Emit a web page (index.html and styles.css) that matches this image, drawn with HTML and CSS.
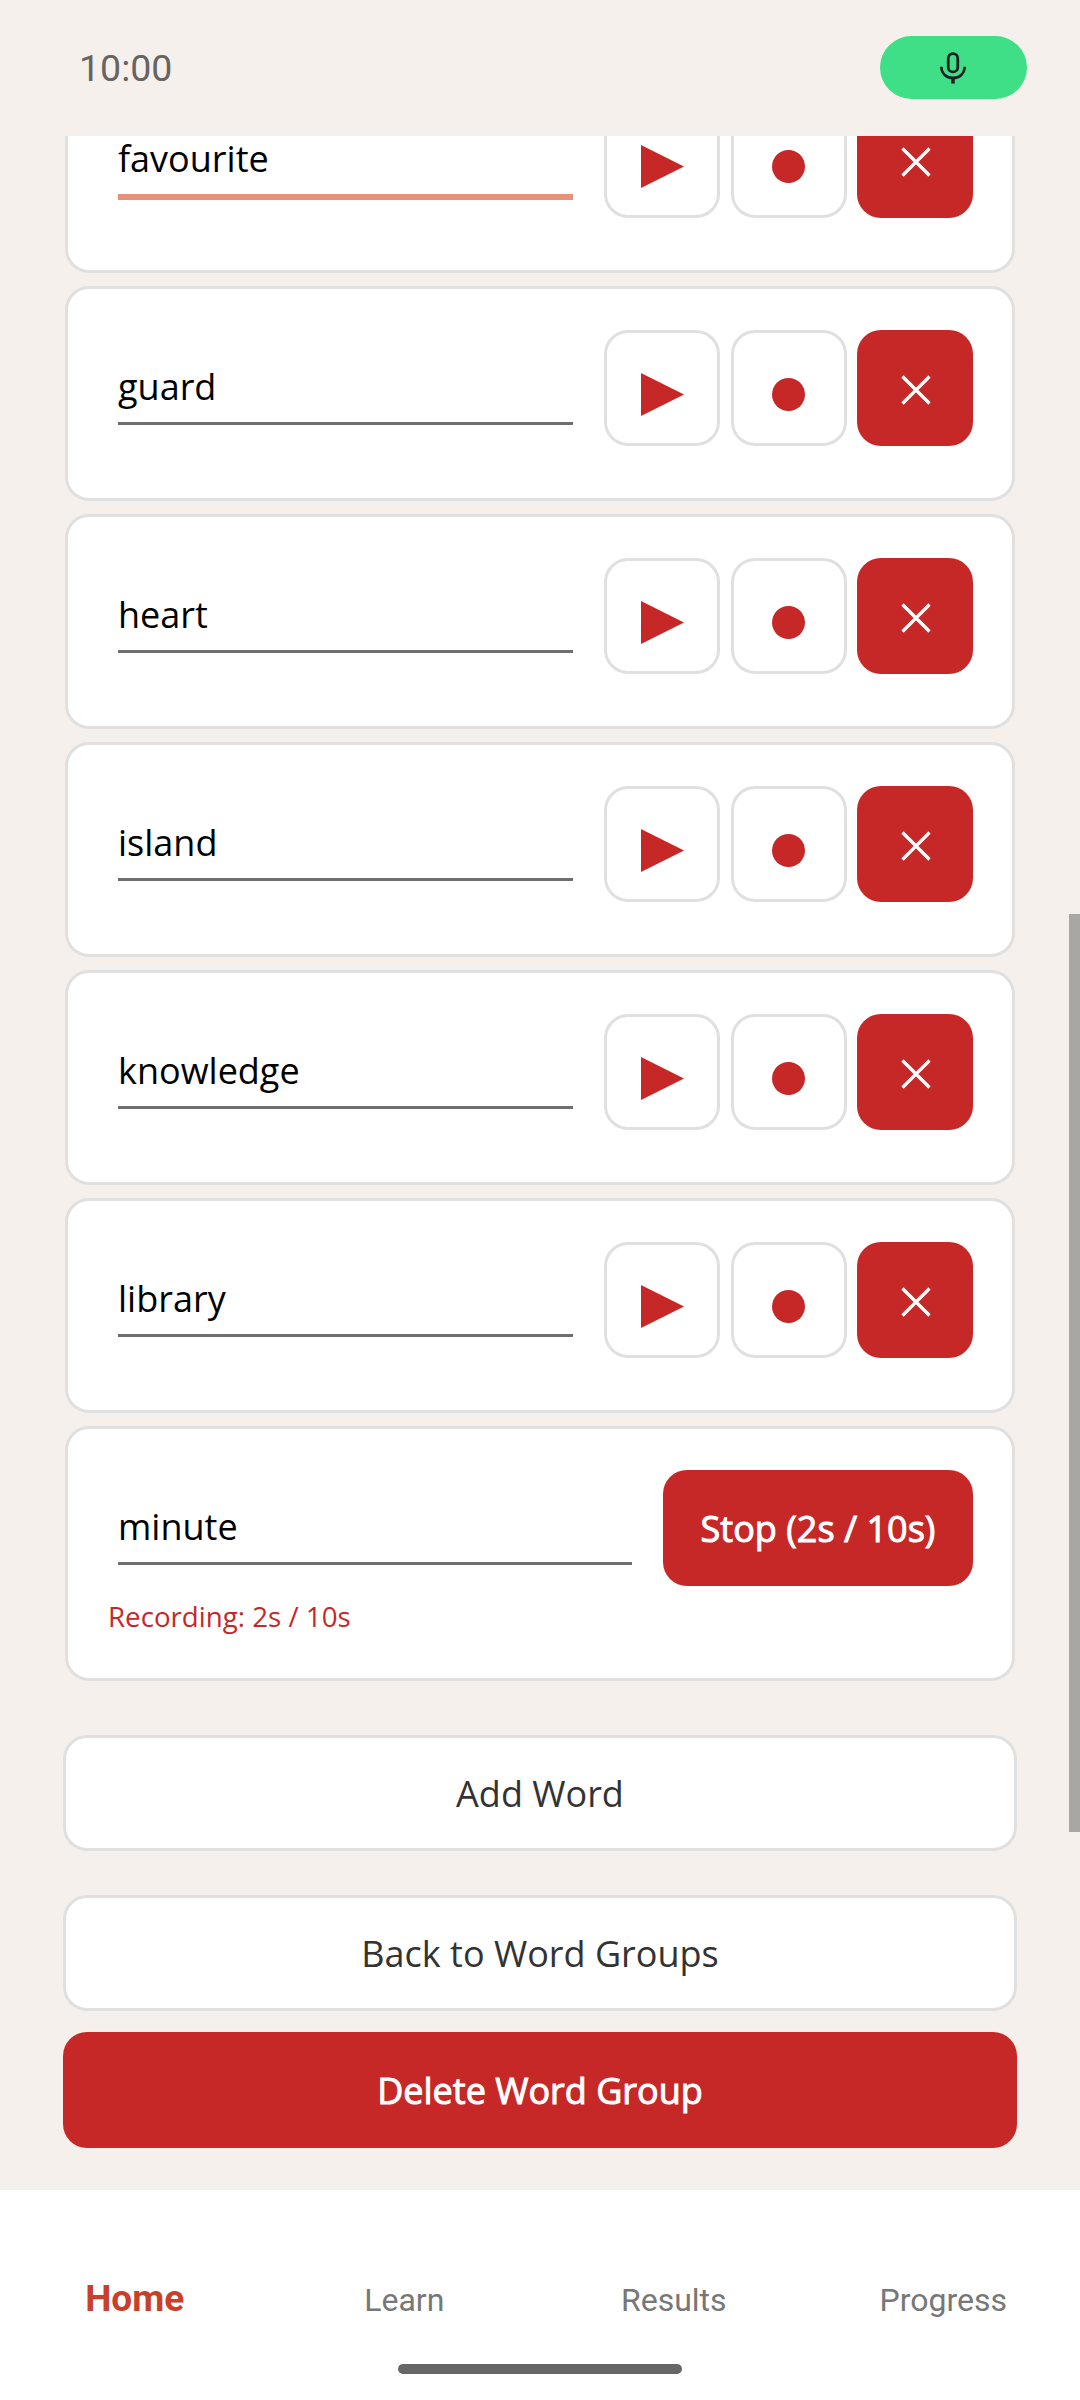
FILE: index.html
```html
<!DOCTYPE html>
<html lang="en">

<head>
    <meta charset="UTF-8">
    <meta name="viewport" content="width=device-width, initial-scale=1.0">
    <title>Edit Word Group</title>

    <link rel="stylesheet" href="styles.css">
</head>

<body>
    <header class="status-bar">
        <span class="status-time">10:00</span>
        <div class="mic-pill">
            <svg class="mic-icon" viewBox="0 0 30 36" width="26" height="34">
                <rect x="9.500" y="1.500" width="11" height="21" rx="5.500" fill="none" stroke="#1b1f23" stroke-width="3.200"/>
                <path d="M1.500 16.500c0 8 6 13 13.500 13s13.500-5 13.500-13" fill="none" stroke="#1b1f23" stroke-width="3.200"/>
                <path d="M15 29v7" fill="none" stroke="#1b1f23" stroke-width="4"/>
            </svg>
        </div>
    </header>

    <main class="scroll-area">
        <div class="scroll-content">
            <ol class="word-list">
                <li class="word-card">
                    <div class="word-row">
                        <div class="word-field word-field-focus">favourite</div>
                        <div class="word-btns">
                            <button class="icon-btn play-btn" type="button"><svg viewBox="0 0 43 43" width="43" height="43"><path d="M0 0L43 21.500L0 43z" fill="#c62828"/></svg></button>
                            <button class="icon-btn rec-btn" type="button"><svg viewBox="0 0 33 33" width="33" height="33"><circle cx="16.500" cy="16.500" r="16.500" fill="#c62828"/></svg></button>
                            <button class="icon-btn del-btn" type="button"><svg viewBox="0 0 30 30" width="30" height="30"><path d="M1.500 1.500L28.500 28.500M28.500 1.500L1.500 28.500" stroke="#fff" stroke-width="3.200"/></svg></button>
                        </div>
                    </div>
                </li>
                <li class="word-card">
                    <div class="word-row">
                        <div class="word-field">guard</div>
                        <div class="word-btns">
                            <button class="icon-btn play-btn" type="button"><svg viewBox="0 0 43 43" width="43" height="43"><path d="M0 0L43 21.500L0 43z" fill="#c62828"/></svg></button>
                            <button class="icon-btn rec-btn" type="button"><svg viewBox="0 0 33 33" width="33" height="33"><circle cx="16.500" cy="16.500" r="16.500" fill="#c62828"/></svg></button>
                            <button class="icon-btn del-btn" type="button"><svg viewBox="0 0 30 30" width="30" height="30"><path d="M1.500 1.500L28.500 28.500M28.500 1.500L1.500 28.500" stroke="#fff" stroke-width="3.200"/></svg></button>
                        </div>
                    </div>
                </li>
                <li class="word-card">
                    <div class="word-row">
                        <div class="word-field">heart</div>
                        <div class="word-btns">
                            <button class="icon-btn play-btn" type="button"><svg viewBox="0 0 43 43" width="43" height="43"><path d="M0 0L43 21.500L0 43z" fill="#c62828"/></svg></button>
                            <button class="icon-btn rec-btn" type="button"><svg viewBox="0 0 33 33" width="33" height="33"><circle cx="16.500" cy="16.500" r="16.500" fill="#c62828"/></svg></button>
                            <button class="icon-btn del-btn" type="button"><svg viewBox="0 0 30 30" width="30" height="30"><path d="M1.500 1.500L28.500 28.500M28.500 1.500L1.500 28.500" stroke="#fff" stroke-width="3.200"/></svg></button>
                        </div>
                    </div>
                </li>
                <li class="word-card">
                    <div class="word-row">
                        <div class="word-field">island</div>
                        <div class="word-btns">
                            <button class="icon-btn play-btn" type="button"><svg viewBox="0 0 43 43" width="43" height="43"><path d="M0 0L43 21.500L0 43z" fill="#c62828"/></svg></button>
                            <button class="icon-btn rec-btn" type="button"><svg viewBox="0 0 33 33" width="33" height="33"><circle cx="16.500" cy="16.500" r="16.500" fill="#c62828"/></svg></button>
                            <button class="icon-btn del-btn" type="button"><svg viewBox="0 0 30 30" width="30" height="30"><path d="M1.500 1.500L28.500 28.500M28.500 1.500L1.500 28.500" stroke="#fff" stroke-width="3.200"/></svg></button>
                        </div>
                    </div>
                </li>
                <li class="word-card">
                    <div class="word-row">
                        <div class="word-field">knowledge</div>
                        <div class="word-btns">
                            <button class="icon-btn play-btn" type="button"><svg viewBox="0 0 43 43" width="43" height="43"><path d="M0 0L43 21.500L0 43z" fill="#c62828"/></svg></button>
                            <button class="icon-btn rec-btn" type="button"><svg viewBox="0 0 33 33" width="33" height="33"><circle cx="16.500" cy="16.500" r="16.500" fill="#c62828"/></svg></button>
                            <button class="icon-btn del-btn" type="button"><svg viewBox="0 0 30 30" width="30" height="30"><path d="M1.500 1.500L28.500 28.500M28.500 1.500L1.500 28.500" stroke="#fff" stroke-width="3.200"/></svg></button>
                        </div>
                    </div>
                </li>
                <li class="word-card">
                    <div class="word-row">
                        <div class="word-field">library</div>
                        <div class="word-btns">
                            <button class="icon-btn play-btn" type="button"><svg viewBox="0 0 43 43" width="43" height="43"><path d="M0 0L43 21.500L0 43z" fill="#c62828"/></svg></button>
                            <button class="icon-btn rec-btn" type="button"><svg viewBox="0 0 33 33" width="33" height="33"><circle cx="16.500" cy="16.500" r="16.500" fill="#c62828"/></svg></button>
                            <button class="icon-btn del-btn" type="button"><svg viewBox="0 0 30 30" width="30" height="30"><path d="M1.500 1.500L28.500 28.500M28.500 1.500L1.500 28.500" stroke="#fff" stroke-width="3.200"/></svg></button>
                        </div>
                    </div>
                </li>
                <li class="word-card recording-card">
                    <div class="word-row">
                        <div class="word-field">minute</div>
                        <button class="stop-btn" type="button">Stop (2s / 10s)</button>
                    </div>
                    <p class="recording-text">Recording: 2s / 10s</p>
                </li>
            </ol>

            <button class="wide-btn add-btn" type="button">Add Word</button>
            <button class="wide-btn back-btn" type="button">Back to Word Groups</button>
            <button class="wide-btn danger-btn" type="button">Delete Word Group</button>
        </div>
        <div class="scroll-thumb"></div>
    </main>

    <nav class="tab-bar">
        <a class="tab tab-active">Home</a>
        <a class="tab">Learn</a>
        <a class="tab">Results</a>
        <a class="tab">Progress</a>
    </nav>
    <div class="home-handle"></div>
</body>

</html>
```

FILE: styles.css
```css
* {
    padding: 0;
    margin: 0;
    box-sizing: border-box;
}

body {
    font-family: "Open Sans", "Noto Sans", sans-serif;
    width: 1080px;
    height: 2400px;
    overflow: hidden;
    display: flex;
    flex-direction: column;
    background-color: #f5f0eb;
    position: relative;
}

/* status bar */
.status-bar {
    height: 136px;
    flex-shrink: 0;
    display: flex;
    align-items: center;
    justify-content: space-between;
    padding: 0 53px 0 79px;
}

.status-time {
    font-family: Roboto, sans-serif;
    font-size: 37.500px;
    color: #666461;
}

.mic-pill {
    width: 147px;
    height: 63px;
    border-radius: 32px;
    margin-bottom: 1px;
    background-color: #3fdf88;
    display: flex;
    align-items: center;
    justify-content: center;
    padding-right: 1px;
}

/* scrolled content */
.scroll-area {
    height: 2054px;
    flex-shrink: 0;
    overflow: hidden;
    position: relative;
}

.scroll-content {
    margin-top: -78px;
    padding: 0 63px;
}

.scroll-thumb {
    position: absolute;
    top: 778px;
    right: 0;
    width: 11px;
    height: 918px;
    background-color: #a9a7a3;
}

.word-list {
    list-style: none;
    display: flex;
    flex-direction: column;
    row-gap: 13px;
    padding: 0 2px;
}

.word-card {
    height: 215px;
    background-color: #fff;
    border: 3px solid #e0e0e0;
    border-radius: 24px;
    padding: 41px 39px 40px 40px;
}

.recording-card {
    height: 255px;
}

.word-row {
    display: flex;
    align-items: center;
    column-gap: 21px;
    height: 116px;
}

.word-field {
    flex: 1;
    height: 74px;
    margin: 0 10px;
    font-size: 36px;
    line-height: 71px;
    color: #000;
    border-bottom: 3px solid #6f6f6f;
}

.word-field-focus {
    border-bottom: 6px solid #e8917a;
    height: 77px;
    margin-bottom: -3px;
}

.word-btns {
    display: flex;
    column-gap: 10.5px;
}

.icon-btn {
    width: 116px;
    height: 116px;
    border-radius: 24px;
    border: 3px solid #e0e0e0;
    background-color: #fff;
    display: flex;
    align-items: center;
    justify-content: center;
}

.play-btn,
.rec-btn {
    padding-top: 12px;
}

.del-btn {
    border: none;
    background-color: #c62828;
    padding: 4px 0 0 2px;
}

.stop-btn {
    width: 310px;
    height: 116px;
    border: none;
    border-radius: 24px;
    background-color: #c62828;
    color: #fff;
    font-family: inherit;
    font-size: 36px;
    -webkit-text-stroke: 1px #fff;
}

.recording-text {
    margin-top: 12px;
    line-height: 37px;
    font-size: 27.700px;
    color: #c62828;
}

.wide-btn {
    display: block;
    width: 954px;
    height: 116px;
    border: 3px solid #e0e0e0;
    border-radius: 24px;
    background-color: #fff;
    color: #333;
    font-family: inherit;
    font-size: 36px;
}

.add-btn {
    margin-top: 54px;
}

.back-btn {
    margin-top: 44px;
}

.danger-btn {
    margin-top: 21px;
    border: none;
    background-color: #c62828;
    color: #fff;
    -webkit-text-stroke: 1px #fff;
}

/* bottom tabs */
.tab-bar {
    flex: 1;
    display: grid;
    grid-template-columns: repeat(4, 269.500px);
    background-color: #fff;
    padding-top: 90px;
    font-family: Roboto, sans-serif;
}

.tab {
    text-align: center;
    font-size: 32px;
    line-height: 40px;
    color: #777;
}

.tab-active {
    color: #c9402a;
    font-size: 37px;
    font-weight: 700;
    margin-top: -1px;
}

.home-handle {
    position: absolute;
    left: 398px;
    bottom: 26px;
    width: 284px;
    height: 10px;
    border-radius: 5px;
    background-color: #666;
}
```
